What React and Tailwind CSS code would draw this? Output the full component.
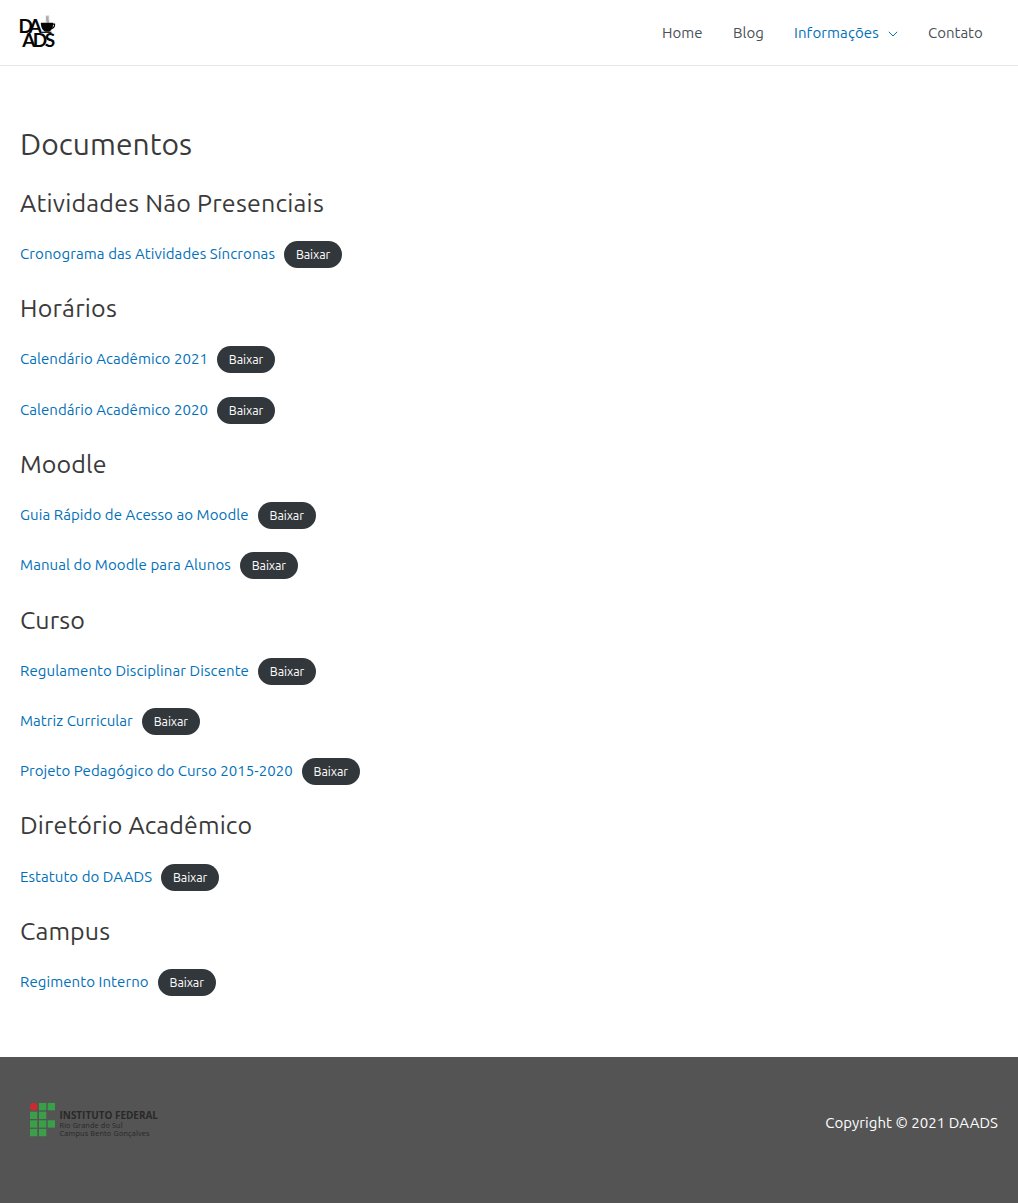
import React from "react";

const sections = [
  { title: "Atividades Não Presenciais", track: "tracking-[0.21px]", docs: [["Cronograma das Atividades Síncronas", "tracking-[0.1px]"]] },
  { title: "Horários", track: "tracking-[0.2px]", docs: [["Calendário Acadêmico 2021", "tracking-[0.05px]"], ["Calendário Acadêmico 2020", "tracking-[0.05px]"]] },
  { title: "Moodle", track: "tracking-[0.1px]", docs: [["Guia Rápido de Acesso ao Moodle", "tracking-[0.09px]"], ["Manual do Moodle para Alunos", "tracking-[0.09px]"]] },
  { title: "Curso", track: "tracking-[0.15px]", docs: [["Regulamento Disciplinar Discente", "tracking-[0.09px]"], ["Matriz Curricular", "tracking-[0.06px]"], ["Projeto Pedagógico do Curso 2015-2020", "tracking-[0.055px]"]] },
  { title: "Diretório Acadêmico", track: "tracking-[0.11px]", docs: [["Estatuto do DAADS", "tracking-[0.07px]"]] },
  { title: "Campus", track: "tracking-[0.1px]", docs: [["Regimento Interno", "tracking-[0.08px]"]] },
];

function Logo() {
  return (
    <svg width="36" height="36" viewBox="0 -1 36 36" className="block overflow-visible" aria-label="DAADS">
      <g fontFamily="Lato, sans-serif" fontWeight="700" fill="#050505">
        <text x="-1.500" y="17" fontSize="19" letterSpacing="-3.700">DA</text>
        <text x="2.200" y="31" fontSize="19" letterSpacing="-2.600">ADS</text>
      </g>
      <path d="M27.500-.5v7" stroke="#c4c4c4" strokeWidth="3.500" />
      <path d="M27 .5v3l1 1.500v2" stroke="#a0a0a0" strokeWidth="1.300" fill="none" />
      <path d="M20.800 6.700h12.400c0 5-2 8.500-4.500 9h-3c-2.500-.5-4.900-4-4.900-9z" fill="#050505" />
      <path d="M32 8.200h2.500c.5 3-1.500 4.500-4.500 4.500" stroke="#050505" strokeWidth="1.300" fill="none" />
      <path d="M22 16.300h9.500" stroke="#050505" strokeWidth="1.200" />
    </svg>
  );
}

function InstituteLogo() {
  return (
    <svg width="132" height="38" viewBox="0 0 132 38" className="block" aria-label="Instituto Federal">
      <circle cx="3.700" cy="3.700" r="3.900" fill="#c92b30" />
      <g fill="#3a9f49">
        <rect x="9" y="0" width="7.300" height="7.300" />
        <rect x="17.700" y="0" width="7.300" height="7.300" />
        <rect x="0" y="8.700" width="7.300" height="7.300" />
        <rect x="9" y="8.700" width="7.300" height="7.300" />
        <rect x="0" y="17.300" width="7.300" height="7.300" />
        <rect x="9" y="17.300" width="7.300" height="7.300" />
        <rect x="17.700" y="17.300" width="7.300" height="7.300" />
        <rect x="0" y="25.900" width="7.300" height="7.300" />
        <rect x="9" y="25.900" width="7.300" height="7.300" />
      </g>
      <g fontFamily="'Open Sans', sans-serif" fill="#292929">
        <text x="29.500" y="16" fontSize="10" fontWeight="700" textLength="98.500" lengthAdjust="spacingAndGlyphs">INSTITUTO FEDERAL</text>
        <text x="29.500" y="24.800" fontSize="7.300" textLength="63" lengthAdjust="spacing">Rio Grande do Sul</text>
        <text x="29.500" y="33" fontSize="7.300" textLength="90" lengthAdjust="spacing">Campus Bento Gonçalves</text>
      </g>
    </svg>
  );
}

export default function App() {
  return (
    <div className="flex min-h-[1203px] flex-col bg-white font-['Ubuntu','Noto_Sans',sans-serif] text-[15px] font-[450] text-[#3a3a3a]">
      <header className="flex h-[66px] items-center justify-between border-b border-[#e6e6e6] px-5">
        <Logo />
        <nav className="flex gap-[30px] pt-0.5 pr-[15px] text-[#4B4F58]">
          <a className="w-[41px]">Home</a>
          <a className="w-[31px]">Blog</a>
          <a className="flex items-center text-[#0170B9]">
            <span className="w-[85px] tracking-[0.1px]">Informações</span>
            <svg width="10" height="6" viewBox="0 0 10 6" className="ml-[9px]" fill="none" stroke="currentColor" strokeWidth="1">
              <path d="M.8.8 5 5 9.200.8" />
            </svg>
          </a>
          <a className="w-[55px]">Contato</a>
        </nav>
      </header>

      <main className="flex-1 px-5 pt-[58px]">
        <h1 className="mb-[21.7px] h-10 text-[30px] font-[450] leading-10 tracking-[0.05px]">Documentos</h1>
        {sections.map((s) => (
          <section key={s.title}>
            <h2 className={`mb-[20.2px] h-[35px] text-[25px] font-[450] leading-[34.6px] ${s.track}`}>{s.title}</h2>
            {s.docs.map(([name, track]) => (
              <div key={name} className="mb-[23.25px] flex h-[27px] items-center">
                <a className={`pb-[0.5px] text-[#0170B9] ${track}`}>{name}</a>
                <a className="ml-[9px] flex h-[27px] w-[58px] items-center justify-center rounded-full bg-[#32373c] text-[12.5px] tracking-[-0.1px] text-white">
                  Baixar
                </a>
              </div>
            ))}
          </section>
        ))}
      </main>

      <footer className="flex h-[146px] items-start justify-between bg-[#545454] px-5 text-white">
        <div className="pt-[46px] pl-[10px]">
          <InstituteLogo />
        </div>
        <p className="pt-[55px] leading-[22px] tracking-[0.05px]">Copyright © 2021 DAADS</p>
      </footer>
    </div>
  );
}
